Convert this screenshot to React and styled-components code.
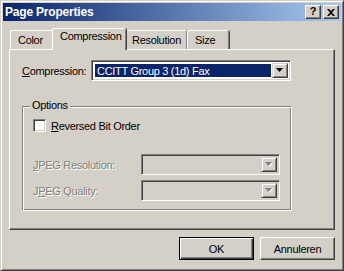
import styled, { createGlobalStyle } from "styled-components";

const Global = createGlobalStyle`
  html, body {
    margin: 0;
    padding: 0;
    background: #d4d0c8;
  }
  * {
    box-sizing: border-box;
  }
`;

const FACE = "#d4d0c8";
const SHADOW = "#808080";
const DARK = "#404040";

const tabs = [
  { label: "Color", width: 44 },
  { label: "Compression", width: 70, active: true },
  { label: "Resolution", width: 63 },
  { label: "Size", width: 42 },
];

export default function App() {
  return (
    <>
      <Global />
      <Window>
        <TitleBar>
          <Title>Page Properties</Title>
          <TitleButtons>
            <CapButton>
              <HelpGlyph>?</HelpGlyph>
            </CapButton>
            <CapButton $gap>
              <svg width="8" height="7" viewBox="0 0 8 7">
                <path d="M0 0h2l2 2 2-2h2L5 3.5 8 7H6L4 5 2 7H0l3-3.5z" fill="#000" />
              </svg>
            </CapButton>
          </TitleButtons>
        </TitleBar>

        <Client>
          <TabStrip>
            {tabs.map((t) => (
              <Tab key={t.label} $width={t.width} $active={t.active}>
                {t.label}
              </Tab>
            ))}
          </TabStrip>

          <Panel>
            <FieldRow>
              <Label $width={69}>
                <u>C</u>ompression:
              </Label>
              <Combo $width={200}>
                <ComboValue>CCITT Group 3 (1d) Fax</ComboValue>
                <DropButton>
                  <Arrow />
                </DropButton>
              </Combo>
            </FieldRow>

            <GroupBox>
              <Legend>Options</Legend>
              <CheckRow>
                <CheckBox />
                <span>
                  <u>R</u>eversed Bit Order
                </span>
              </CheckRow>
              <GroupRows>
                <FieldRow>
                  <Label $width={108} $disabled>
                    <u>J</u>PEG Resolution:
                  </Label>
                  <Combo $width={139} $disabled>
                    <ComboValue $disabled />
                    <DropButton>
                      <Arrow $disabled />
                    </DropButton>
                  </Combo>
                </FieldRow>
                <FieldRow>
                  <Label $width={108} $disabled>
                    J<u>P</u>EG Quality:
                  </Label>
                  <Combo $width={139} $disabled>
                    <ComboValue $disabled />
                    <DropButton>
                      <Arrow $disabled />
                    </DropButton>
                  </Combo>
                </FieldRow>
              </GroupRows>
            </GroupBox>
          </Panel>

          <ButtonRow>
            <PushButton $default>OK</PushButton>
            <PushButton>Annuleren</PushButton>
          </ButtonRow>
        </Client>
      </Window>
    </>
  );
}

function Arrow({ $disabled }) {
  return (
    <svg width="8" height="5" viewBox="0 0 8 5">
      {$disabled && <path d="M1 1h7L4.5 5z" fill="#fff" />}
      <path d="M0 0h7L3.5 4z" fill={$disabled ? SHADOW : "#000"} />
    </svg>
  );
}

const Window = styled.div`
  width: 344px;
  height: 271px;
  background: ${FACE};
  border: 1px solid;
  border-color: ${FACE} ${DARK} ${DARK} ${FACE};
  box-shadow: inset 1px 1px #fff, inset -1px -1px ${SHADOW};
  padding: 2px;
  display: flex;
  flex-direction: column;
  font-family: "Liberation Sans", Arial, sans-serif;
  font-size: 11px;
  letter-spacing: -0.3px;
  color: #000;
`;

const TitleBar = styled.div`
  height: 18px;
  display: flex;
  align-items: center;
  justify-content: space-between;
  padding: 0 2px 0 2px;
  background: linear-gradient(to right, #0a246a, #a6caf0);
`;

const Title = styled.div`
  color: #fff;
  font-weight: bold;
  font-size: 12px;
  letter-spacing: -0.2px;
`;

const TitleButtons = styled.div`
  display: flex;
  align-items: center;
`;

const CapButton = styled.div`
  width: 16px;
  height: 14px;
  margin-left: ${(p) => (p.$gap ? "2px" : "0")};
  background: ${FACE};
  border: 1px solid;
  border-color: #fff ${DARK} ${DARK} #fff;
  box-shadow: inset -1px -1px ${SHADOW};
  display: flex;
  align-items: center;
  justify-content: center;
`;

const HelpGlyph = styled.span`
  font-weight: bold;
  font-size: 11px;
  line-height: 1;
  margin-top: -1px;
`;

const Client = styled.div`
  flex: 1;
  display: flex;
  flex-direction: column;
  padding: 7px 6px 0 6px;
`;

const TabStrip = styled.div`
  display: flex;
  align-items: flex-end;
  height: 21px;
  padding-left: 1px;
  position: relative;
  z-index: 1;
`;

const Tab = styled.div`
  width: ${(p) => (p.$active ? p.$width + 4 : p.$width)}px;
  height: ${(p) => (p.$active ? 22 : 19)}px;
  margin: 0 ${(p) => (p.$active ? -2 : 0)}px
    ${(p) => (p.$active ? -1 : 0)}px;
  background: ${FACE};
  border: solid #fff;
  border-width: 1px 0 0 1px;
  border-radius: 2px 2px 0 0;
  box-shadow: 1px 0 ${DARK}, inset -1px 0 ${SHADOW};
  padding: ${(p) => (p.$active ? "1px 0 0 7px" : "3px 0 0 7px")};
  white-space: nowrap;
  position: relative;
  z-index: ${(p) => (p.$active ? 2 : 0)};
`;

const Panel = styled.div`
  height: 181px;
  border: 1px solid;
  border-color: #fff ${DARK} ${DARK} #fff;
  box-shadow: inset -1px -1px ${SHADOW};
  padding: 10px 0 0 12px;
  display: flex;
  flex-direction: column;
`;

const FieldRow = styled.div`
  display: flex;
  align-items: center;
`;

const Label = styled.div`
  width: ${(p) => p.$width}px;
  color: ${(p) => (p.$disabled ? SHADOW : "#000")};
  text-shadow: ${(p) => (p.$disabled ? "1px 1px #fff" : "none")};
  white-space: nowrap;
`;

const Combo = styled.div`
  width: ${(p) => p.$width}px;
  height: 21px;
  display: flex;
  border: 1px solid;
  border-color: ${SHADOW} #fff #fff ${SHADOW};
  box-shadow: inset 1px 1px ${DARK}, inset -1px -1px ${FACE};
  padding: 2px;
  background: ${(p) => (p.$disabled ? FACE : "#fff")};
`;

const ComboValue = styled.div`
  flex: 1;
  margin: 1px;
  background: ${(p) => (p.$disabled ? "transparent" : "#0a246a")};
  color: #fff;
  padding-left: 2px;
  display: flex;
  align-items: center;
`;

const DropButton = styled.div`
  width: 16px;
  background: ${FACE};
  border: 1px solid;
  border-color: ${FACE} ${DARK} ${DARK} ${FACE};
  box-shadow: inset 1px 1px #fff, inset -1px -1px ${SHADOW};
  display: flex;
  align-items: center;
  justify-content: center;
`;

const GroupBox = styled.div`
  position: relative;
  width: 270px;
  height: 105px;
  margin-top: 25px;
  border: 1px solid ${SHADOW};
  border-right-color: #fff;
  border-bottom-color: #fff;
  box-shadow: inset 1px 1px #fff, inset -1px -1px ${SHADOW};
  padding: 12px 0 0 10px;
`;

const Legend = styled.div`
  position: absolute;
  top: -8px;
  left: 7px;
  padding: 0 2px 0 2px;
  background: ${FACE};
`;

const CheckRow = styled.div`
  display: flex;
  align-items: center;
  gap: 5px;
`;

const CheckBox = styled.div`
  width: 13px;
  height: 13px;
  background: #fff;
  border: 1px solid;
  border-color: ${SHADOW} #fff #fff ${SHADOW};
  box-shadow: inset 1px 1px ${DARK}, inset -1px -1px ${FACE};
`;

const GroupRows = styled.div`
  display: flex;
  flex-direction: column;
  gap: 5px;
  margin-top: 22px;
`;

const ButtonRow = styled.div`
  display: flex;
  justify-content: flex-end;
  gap: 6px;
  margin-top: 7px;
`;

const PushButton = styled.div`
  width: 75px;
  height: 23px;
  display: flex;
  align-items: center;
  justify-content: center;
  border: 1px solid;
  border-color: ${(p) =>
    p.$default ? "#000" : `#fff ${DARK} ${DARK} #fff`};
  box-shadow: ${(p) =>
    p.$default
      ? `inset 1px 1px #fff, inset -1px -1px ${DARK}, inset -2px -2px ${SHADOW}`
      : `inset -1px -1px ${SHADOW}`};
`;
